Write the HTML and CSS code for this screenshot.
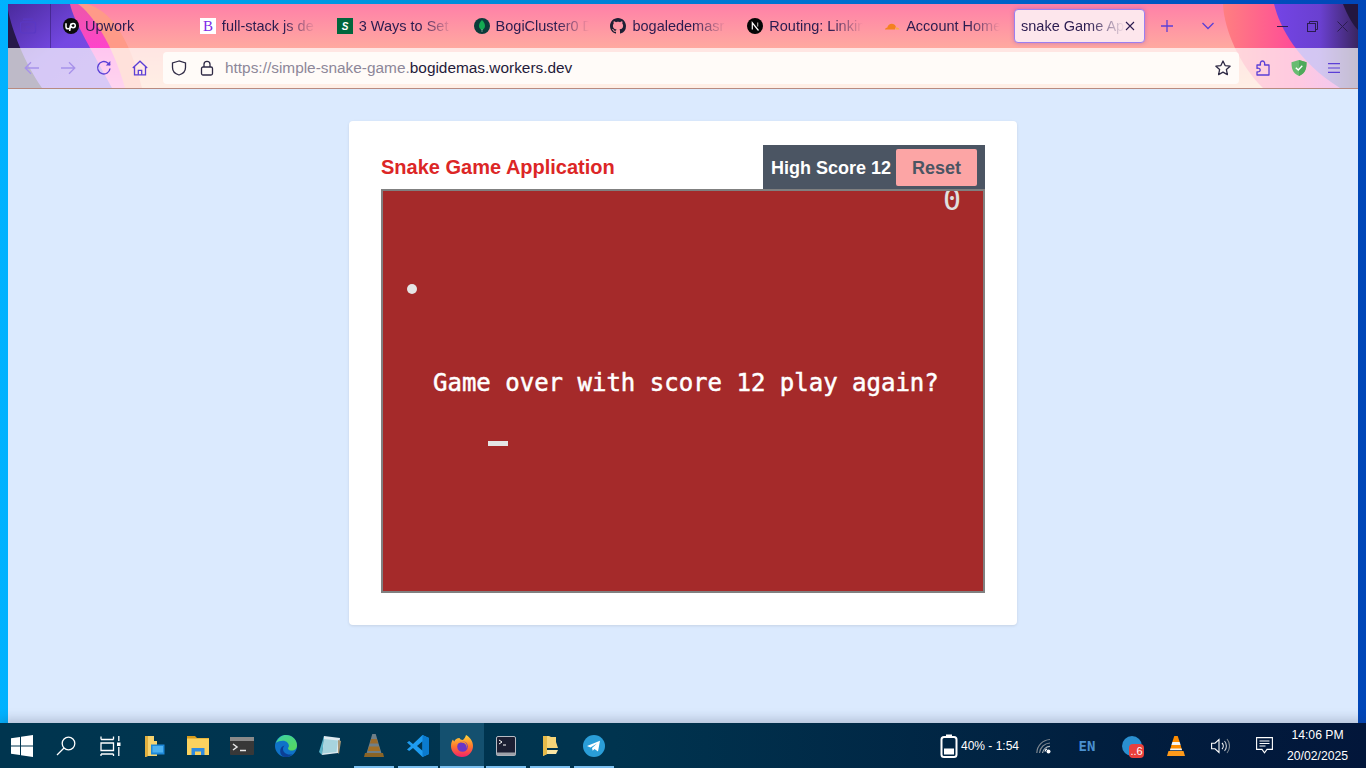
FILE: index.html
```html
<!DOCTYPE html>
<html lang="en">
<head>
    <meta charset="UTF-8">
    <meta name="viewport" content="width=device-width, initial-scale=1.0">
    <title>Snake Game Application</title>
    <link rel="stylesheet" href="styles.css">
</head>
<body>
    <div class="window">
        <div class="chrome">
            <!-- browser theme artwork, sits behind the tab strip and toolbar -->
            <svg class="theme-art" viewBox="8 4 1350 84" width="1350" height="84">
                <defs>
                    <linearGradient id="purple-l" x1="0" y1="0" x2="1" y2="1">
                        <stop offset="0" stop-color="#4a2a9c"/>
                        <stop offset="0.5" stop-color="#7448e2"/>
                        <stop offset="1" stop-color="#7e4ce0"/>
                    </linearGradient>
                    <linearGradient id="magenta-l" x1="0" y1="0" x2="0" y2="1">
                        <stop offset="0" stop-color="#ec58a8"/>
                        <stop offset="0.55" stop-color="#ff42cc"/>
                        <stop offset="1" stop-color="#ff70c8"/>
                    </linearGradient>
                    <linearGradient id="purple-r" x1="0" y1="0" x2="1" y2="0">
                        <stop offset="0" stop-color="#7444e6"/>
                        <stop offset="0.55" stop-color="#6a40d0"/>
                        <stop offset="1" stop-color="#3a2560"/>
                    </linearGradient>
                    <linearGradient id="pink-r" x1="0" y1="0" x2="1" y2="0">
                        <stop offset="0" stop-color="#ff7f80"/>
                        <stop offset="0.55" stop-color="#ff4a98"/>
                        <stop offset="1" stop-color="#c848d8"/>
                    </linearGradient>
                </defs>
                <path d="M8 4H87C108 10 128 32 142 88H8Z" fill="#ff9a88"/>
                <path d="M8 4H78C92 14 112 42 125 88H8Z" fill="url(#magenta-l)"/>
                <path d="M8 4H70C74 22 92 50 112 88H8Z" fill="url(#purple-l)"/>
                <path d="M8 10C12 30 24 62 42 88H8Z" fill="#261848"/>
                <path d="M1358 4H1223C1224 30 1240 66 1263 88H1358Z" fill="url(#pink-r)"/>
                <path d="M1358 4H1274C1280 28 1298 62 1340 88H1358Z" fill="url(#purple-r)"/>
                <path d="M1358 4H1343C1347 14 1352 24 1358 30Z" fill="#23163f"/>
            </svg>

            <div class="tabbar">
                <button class="view-btn">
                    <svg width="18" height="18" viewBox="0 0 18 18" fill="none" stroke="#5a38c4" stroke-width="1.2"><rect x="1.5" y="5" width="15" height="11" rx="2"/><path d="M4 2.2h10M7 10h4"/></svg>
                </button>
                <div class="tabs">
                    <div class="tab">
                        <svg class="favicon" viewBox="0 0 16 16"><circle cx="8" cy="8" r="8" fill="#0b0b0b"/><path d="M3 5.3v3.4a2.1 2.1 0 0 0 4.200 0c.2-1.900 1.200-3.300 2.900-3.300a2.200 2.200 0 0 1 0 4.400c-1.200 0-2-1-2.500-2.200L6.700 13" fill="none" stroke="#fff" stroke-width="1.5"/></svg>
                        <span class="tab-label">Upwork</span>
                    </div>
                    <div class="tab">
                        <svg class="favicon" viewBox="0 0 16 16"><rect width="16" height="16" fill="#fff"/><text x="8" y="13" text-anchor="middle" class="fav-b">B</text></svg>
                        <span class="tab-label">full-stack js de</span>
                    </div>
                    <div class="tab">
                        <svg class="favicon" viewBox="0 0 16 16"><rect width="16" height="16" fill="#00663c"/><text x="8" y="11.500" text-anchor="middle" class="fav-s">S</text></svg>
                        <span class="tab-label">3 Ways to Set</span>
                    </div>
                    <div class="tab">
                        <svg class="favicon" viewBox="0 0 16 16"><circle cx="8" cy="8" r="8" fill="#0b3b3a"/><path d="M8 2c2 2.200 3 4 3 6s-1.500 3.500-3 4.300C6.500 11.500 5 10 5 8s1-3.800 3-6Z" fill="#13aa52"/><path d="M7.700 11h.6v3h-.6Z" fill="#b8c4c2"/></svg>
                        <span class="tab-label">BogiCluster0 D</span>
                    </div>
                    <div class="tab">
                        <svg class="favicon" viewBox="0 0 16 16"><path fill="#1f1f33" d="M8 0C3.58 0 0 3.58 0 8c0 3.54 2.29 6.53 5.47 7.59.4.07.55-.17.55-.38 0-.19-.01-.82-.01-1.49-2.010.37-2.530-.49-2.690-.94-.09-.23-.48-.94-.82-1.130-.28-.15-.68-.52-.01-.53.63-.01 1.080.58 1.230.82.72 1.210 1.870.87 2.330.66.07-.52.28-.87.51-1.070-1.780-.2-3.640-.89-3.640-3.950 0-.87.31-1.590.82-2.150-.08-.2-.36-1.020.08-2.120 0 0 .67-.21 2.200.82.64-.18 1.320-.27 2-.27.68 0 1.360.09 2 .27 1.530-1.040 2.200-.82 2.200-.82.44 1.100.16 1.920.08 2.120.51.56.82 1.270.82 2.150 0 3.070-1.870 3.750-3.650 3.950.29.25.54.73.54 1.480 0 1.070-.01 1.930-.01 2.200 0 .21.15.46.55.38A8.013 8.013 0 0 0 16 8c0-4.420-3.580-8-8-8z"/></svg>
                        <span class="tab-label">bogaledemasr</span>
                    </div>
                    <div class="tab">
                        <svg class="favicon" viewBox="0 0 16 16"><circle cx="8" cy="8" r="8" fill="#050505"/><path d="M5.300 11.500V4.800L11.500 12.500" fill="none" stroke="#fff" stroke-width="1.2"/><path d="M10.700 4.600v4" stroke="#bbb" stroke-width="1.1"/></svg>
                        <span class="tab-label">Routing: Linkin</span>
                    </div>
                    <div class="tab">
                        <svg class="favicon" viewBox="0 0 16 16"><path d="M1 11.500c.1-1.200 1-1.800 2.200-1.800.7-2.600 2.500-4 4.600-4 1.900 0 3.300 1 4 2.800-.1 1-.5 2.200-1 3Z" fill="#f48120"/><path d="M11.500 11.500c.3-1 .5-1.500.6-2 .9-.2 2.900.2 3.400 2Z" fill="#fbad41"/></svg>
                        <span class="tab-label">Account Home</span>
                    </div>
                    <div class="tab tab-active">
                        <span class="tab-label">snake Game Ap</span>
                        <svg class="tab-close" width="10" height="10" viewBox="0 0 10 10" stroke="#2b1c50" stroke-width="1.1"><path d="M1 1l8 8M9 1l-8 8"/></svg>
                    </div>
                </div>
                <button class="strip-btn">
                    <svg width="14" height="14" viewBox="0 0 14 14" stroke="#5b3fd6" stroke-width="1.3"><path d="M7 1v12M1 7h12"/></svg>
                </button>
                <button class="strip-btn strip-btn-gap">
                    <svg width="14" height="8" viewBox="0 0 14 8" fill="none" stroke="#5b3fd6" stroke-width="1.3"><path d="M1.500 1l5.500 5.500L12.500 1"/></svg>
                </button>
                <div class="win-controls">
                    <button class="win-btn"><svg width="11" height="11" viewBox="0 0 11 11" stroke="#2b1c50"><path d="M0 5.500h11"/></svg></button>
                    <button class="win-btn"><svg width="11" height="11" viewBox="0 0 11 11" fill="none" stroke="#2b1c50"><rect x=".5" y="2.500" width="8" height="8"/><path d="M2.500 2.500V.5h8v8h-2"/></svg></button>
                    <button class="win-btn"><svg width="11" height="11" viewBox="0 0 11 11" stroke="#2b1c50"><path d="M.5.5l10 10M10.500.5l-10 10"/></svg></button>
                </div>
            </div>

            <div class="toolbar">
                <button class="tool-btn">
                    <svg width="16" height="14" viewBox="0 0 16 14" fill="none" stroke="#a792ea" stroke-width="1.3"><path d="M15 7H1.500M7 1.200 1.200 7 7 12.800"/></svg>
                </button>
                <button class="tool-btn">
                    <svg width="16" height="14" viewBox="0 0 16 14" fill="none" stroke="#a792ea" stroke-width="1.3"><path d="M1 7h13.500M9 1.200 14.800 7 9 12.800"/></svg>
                </button>
                <button class="tool-btn">
                    <svg width="16" height="16" viewBox="0 0 16 16" fill="none" stroke="#5b3fd6" stroke-width="1.4"><path d="M14 8.500A6.200 6.200 0 1 1 11.800 3L14 5"/><path d="M14.300 1v4.500H9.800" fill="#5b3fd6" stroke="none"/></svg>
                </button>
                <button class="tool-btn">
                    <svg width="16" height="16" viewBox="0 0 16 16" fill="none" stroke="#5b3fd6" stroke-width="1.3"><path d="M.8 8 8 1.200 15.200 8"/><path d="M2.500 6.800v8h11v-8"/><path d="M6.300 14.800v-4.500h3.400v4.500"/></svg>
                </button>
                <div class="urlbar">
                    <svg class="url-shield" width="16" height="16" viewBox="0 0 16 16" fill="none" stroke="#2f2a45" stroke-width="1.3"><path d="M8 1 1.500 3v4.500C1.500 11.500 4.500 14 8 15c3.500-1 6.500-3.500 6.500-7.500V3Z"/></svg>
                    <svg class="url-lock" width="14" height="16" viewBox="0 0 14 16" fill="none" stroke="#2f2a45" stroke-width="1.3"><rect x="1.500" y="7" width="11" height="8" rx="1.500"/><path d="M4 7V4.300a3 3 0 0 1 6 0V7"/></svg>
                    <span class="url-text"><span class="url-dim">https://simple-snake-game.</span>bogidemas.workers.dev</span>
                    <svg class="url-star" width="16" height="16" viewBox="0 0 16 16" fill="none" stroke="#2f2a45" stroke-width="1.3"><path d="M8 1l2.100 4.600 5 .6-3.700 3.400 1 5L8 12.100 3.600 14.600l1-5L.9 6.200l5-.6Z" stroke-linejoin="round"/></svg>
                </div>
                <button class="tool-btn tool-btn-first">
                    <svg width="14" height="16" viewBox="0 0 14 16" fill="none" stroke="#5b3fd6" stroke-width="1.3"><path d="M1 5h3.500C4 3.500 4.300 1 6.500 1S9 3.500 8.500 5H13v10H1v-3.200c2 .5 3.200-.5 3.200-1.800S3 7.800 1 8.300Z" stroke-linejoin="round"/></svg>
                </button>
                <button class="tool-btn">
                    <svg width="16" height="16" viewBox="0 0 16 16"><path d="M8 0 .5 2.300c0 6 .8 10.700 7.500 13.700 6.700-3 7.500-7.700 7.500-13.700Z" fill="#68bc71"/><path d="M8 0v16c6.700-3 7.500-7.700 7.500-13.700Z" fill="#4fa95a"/><path d="M4.800 7.700 7.300 10l4-4.200" fill="none" stroke="#fff" stroke-width="1.4"/></svg>
                </button>
                <button class="tool-btn tool-btn-last">
                    <svg width="12" height="10" viewBox="0 0 12 10" stroke="#5b3fd6" stroke-width="1.1"><path d="M0 .6h12M0 5h12M0 9.400h12"/></svg>
                </button>
            </div>
        </div>

        <main class="page">
            <section class="card">
                <header class="card-head">
                    <h1 class="title">Snake Game Application</h1>
                    <div class="score-box">
                        <span class="high-score">High Score 12</span>
                        <button class="reset-btn">Reset</button>
                    </div>
                </header>
                <div class="board">
                    <span class="board-score">0</span>
                    <span class="food"></span>
                    <span class="game-over">Game over with score 12 play again?</span>
                    <span class="snake"></span>
                </div>
            </section>
        </main>
    </div>

    <footer class="taskbar">
        <div class="task-icons">
            <div class="task-btn">
                <svg width="22" height="22" viewBox="0 0 22 22" fill="#fff"><path d="M0 3.200 9 2v8.500H0ZM10 1.800 22 0v10.500H10ZM0 11.500h9V20L0 18.800ZM10 11.500h12V22l-12-1.800Z"/></svg>
            </div>
            <div class="task-btn">
                <svg width="20" height="20" viewBox="0 0 20 20" fill="none" stroke="#fff" stroke-width="1.3"><circle cx="12.500" cy="7.500" r="6.300"/><path d="M8 12 1 19"/></svg>
            </div>
            <div class="task-btn">
                <svg width="21" height="20" viewBox="0 0 21 20" fill="none" stroke="#fff" stroke-width="1.3"><path d="M1 3.500h12.500M1 .5v3M13.500.5v3M1 7h12.500v7.500H1ZM1 18h12.500M1 18v2M13.500 18v2M18.800 0v5M18.800 11v9"/><rect x="17" y="6.500" width="3.500" height="3.500" fill="#fff" stroke="none"/></svg>
            </div>
            <div class="task-btn">
                <svg width="21" height="22" viewBox="0 0 21 22"><path d="M1 1h9v5h3v15H4l-3 1Z" fill="#f6d36f"/><path d="M1 1h3v20l-3 1Z" fill="#e2b03f"/><rect x="7" y="9.500" width="13.500" height="10" fill="#1e88d8"/><rect x="8.500" y="11" width="10.500" height="6.500" fill="#4db1f0"/></svg>
            </div>
            <div class="task-btn">
                <svg width="22" height="19" viewBox="0 0 22 19"><path d="M0 0h8l2 2h12v3H0Z" fill="#d89b1c"/><rect y="2.500" width="22" height="16.500" fill="#fbd25f"/><path d="M4.500 19v-7h13v7h-3.500v-3.500H8V19Z" fill="#2f8be0"/></svg>
            </div>
            <div class="task-btn">
                <svg width="24" height="18" viewBox="0 0 24 18"><rect width="24" height="18" rx="1" fill="#383838"/><rect width="24" height="4" fill="#8a8a8a"/><path d="M3 7l4 3-4 3" fill="none" stroke="#e6e6e6" stroke-width="1.5"/><path d="M10 13.500h6" stroke="#e6e6e6" stroke-width="1.5"/></svg>
            </div>
            <div class="task-btn">
                <svg width="22" height="22" viewBox="0 0 22 22"><defs><linearGradient id="edge-a" x1="0" y1="0" x2="1" y2="1"><stop offset="0" stop-color="#3ad0a8"/><stop offset="1" stop-color="#58d858"/></linearGradient></defs><circle cx="11" cy="11" r="11" fill="#0f72c8"/><path d="M1 8C3 2.500 7 0 11 0c6 0 11 4.500 11 10.500 0 3-2.300 5-5.300 5-2 0-3.700-.9-3.700-2.300 0-.7.9-1.100.9-2.500 0-2.800-2.900-5-5.900-5C5 5.700 2.500 6.500 1 8Z" fill="url(#edge-a)"/><path d="M8 14c0 3 3 5.500 6.500 5.500 1 0 2-.2 3-.6-1.700 2-4 3.100-6.500 3.100-3 0-5.800-2-5.800-6 0-2.500 1.500-5 4.300-5.500C8.700 11.500 8 12.500 8 14Z" fill="#0b3f96"/></svg>
            </div>
            <div class="task-btn">
                <svg width="24" height="22" viewBox="0 0 24 22"><path d="M6 1 22 3l-2 15-16 2Z" fill="#dfeaf0"/><path d="M6 1 1 17l3 3L6 4Z" fill="#59b3c8"/><path d="M6 4 20 5.500 18.500 17 4.500 18.500Z" fill="#a7d4de"/><path d="M20 5l3 1-2 13-1-1Z" fill="#a89878"/></svg>
            </div>
            <div class="task-btn task-btn-open">
                <svg width="20" height="24" viewBox="0 0 20 24"><path d="M8.300 0h3.400l6 20H2.300Z" fill="#6f7f88"/><path d="M7.200 5h5.600l1.300 4.500H5.900Z" fill="#9a6b2c"/><path d="M5 12.500h10l1.200 4.500H3.800Z" fill="#a37026"/><path d="M1 19h18l1 4H0Z" fill="#8a6426"/></svg>
            </div>
            <div class="task-btn task-btn-open">
                <svg width="22" height="22" viewBox="0 0 22 22"><path d="M15.500 0 22 3v16l-6.500 3L6 13l-3.800 3L0 14.500 4 11 0 7.500 2.200 6 6 9Zm0 6.200L10 11l5.500 4.800Z" fill="#1e9cf0"/><path d="M15.500 0 22 3v16l-6.500 3Z" fill="#0a7bcf"/></svg>
            </div>
            <div class="task-btn task-btn-active">
                <svg width="22" height="22" viewBox="0 0 22 22"><defs><linearGradient id="fx-a" x1="0.500" y1="0" x2="0.500" y2="1"><stop offset="0" stop-color="#ffd43b"/><stop offset="0.5" stop-color="#ff7a2b"/><stop offset="1" stop-color="#f5206a"/></linearGradient></defs><path d="M15 0c3.500 2 7 5.500 7 11a11 11 0 0 1-22 0C0 8 1 5.500 2 4.500c.3 1 .8 1.500 1.300 2C4 4.500 6 3 8.500 3 9 4 10 5 12 5c1-1 2.500-3 3-5Z" fill="url(#fx-a)"/><circle cx="11.500" cy="11.500" r="5.300" fill="#6a35c8"/><path d="M6 9c2-1.800 5-2 7-1 2 1.200 3 3 2.500 5.500 1.500-3-.5-7-4.500-7.500C8.500 5.500 7 7 6 9Z" fill="#ff9a2e"/></svg>
            </div>
            <div class="task-btn task-btn-open">
                <svg width="20" height="20" viewBox="0 0 20 20"><rect x=".5" y=".5" width="19" height="19" rx="1.500" fill="#1c1f33" stroke="#b8bcc4"/><rect x=".5" y="16.500" width="19" height="3" fill="#9ea2aa"/><path d="M3 4l3 2-3 2" fill="none" stroke="#fff"/><path d="M7 9h3" stroke="#fff"/></svg>
            </div>
            <div class="task-btn task-btn-open">
                <svg width="15" height="21" viewBox="0 0 15 21"><path d="M0 1h6l2 1h5v5l2 6H4v6l-4 2Z" fill="#f6d579"/><path d="M0 1h4v18l-4 2Z" fill="#e6bb4a"/><path d="M4 15h11l-2 4H4Z" fill="#fbe6a4"/></svg>
            </div>
            <div class="task-btn task-btn-open">
                <svg width="22" height="22" viewBox="0 0 22 22"><circle cx="11" cy="11" r="11" fill="#2a9ed8"/><path d="M4 11 17 5.800 15 16.500 11.500 14l-1.800 1.800L9 13l5-4.500L7.500 12.500Z" fill="#fff"/></svg>
            </div>
        </div>
        <div class="tray">
            <div class="battery">
                <svg width="18" height="24" viewBox="0 0 18 24"><path d="M6 .5h6v2H6Z" fill="#fff"/><rect x="1.500" y="3" width="15" height="20" rx="2.500" fill="none" stroke="#fff" stroke-width="2"/><rect x="4" y="14.500" width="10" height="6" fill="#fff"/></svg>
                <span>40% - 1:54</span>
            </div>
            <div class="tray-btn">
                <svg width="16" height="16" viewBox="0 0 16 16" fill="none" stroke="#7d8790" stroke-width="1.2"><path d="M.8 15A14 14 0 0 1 14 1.500M3.500 15A11 11 0 0 1 14 5"/><path d="M6.500 15A8 8 0 0 1 14 8.300" stroke="#aab2b8"/><circle cx="12.500" cy="13.500" r="2" fill="#fff" stroke="none"/><path d="M9 13.500a3 3 0 0 1 2-2.500" stroke="#fff"/></svg>
            </div>
            <div class="tray-btn tray-lang">EN</div>
            <div class="tray-btn">
                <span class="badge-icon"><span class="badge-count">..6</span></span>
            </div>
            <div class="tray-btn">
                <svg width="18" height="20" viewBox="0 0 18 20"><path d="M7.300 0h3.400l2 6H5.300Z" fill="#ff8c00"/><path d="M5.300 6h7.400l.9 3H4.400Z" fill="#f4f4f4"/><path d="M4.400 9h9.200l1.300 5H3.100Z" fill="#ff8c00"/><path d="M3.500 12.500h11l.6 1.800H2.900Z" fill="#f4f4f4"/><path d="M1.500 15h15l1.500 5H0Z" fill="#ff9a1a"/></svg>
            </div>
            <div class="tray-btn">
                <svg width="19" height="16" viewBox="0 0 19 16" fill="none" stroke="#fff" stroke-width="1.1"><path d="M.6 5.200h3.400L8 1.500v13L4 10.800H.6Z"/><path d="M11 5a4.300 4.300 0 0 1 0 6"/><path d="M13.500 3a7.500 7.500 0 0 1 0 10" stroke="#c9ced3"/><path d="M16 1a11 11 0 0 1 0 14" stroke="#7d8790"/></svg>
            </div>
            <div class="tray-btn">
                <svg width="17" height="17" viewBox="0 0 17 17" fill="none" stroke="#fff" stroke-width="1.1"><path d="M.6.6h15.800v11.800H11l-2.500 3.400L6 12.400H.6Z"/><path d="M3.500 4h10M3.500 6.500h10M3.500 9h6"/></svg>
            </div>
            <div class="clock">
                <span>14:06 PM</span>
                <span>20/02/2025</span>
            </div>
        </div>
    </footer>
</body>
</html>
```

FILE: styles.css
```css
* {
    box-sizing: border-box;
}

body {
    margin: 0;
    height: 100vh;
    overflow: hidden;
    display: flex;
    flex-direction: column;
    font-family: 'Liberation Sans', Arial, sans-serif;
    background: linear-gradient(90deg, #00b2ff 0%, #0090dc 30%, #0070d0 60%, #0046b8 100%);
}

button {
    border: none;
    background: none;
    padding: 0;
    font-family: inherit;
}

svg {
    display: block;
    flex-shrink: 0;
}

.window {
    flex: 1;
    min-height: 0;
    margin: 4px 8px 0;
    display: flex;
    flex-direction: column;
}

/* browser chrome */
.chrome {
    position: relative;
    height: 85px;
    background: linear-gradient(180deg, #ff80a8 0%, #ffa9a0 52%, #ffc8a8 100%);
    border-bottom: 1px solid #b88a80;
    flex-shrink: 0;
}

.theme-art {
    position: absolute;
    left: 0;
    top: 0;
}

.tabbar {
    position: relative;
    height: 44px;
    display: flex;
    align-items: center;
}

.view-btn {
    width: 43px;
    height: 44px;
    border-right: 1px solid rgba(40, 20, 90, 0.45);
    display: flex;
    align-items: center;
    justify-content: center;
    padding-right: 3px;
}

.tabs {
    display: flex;
    align-items: center;
    margin-left: 5px;
    width: 1089px;
}

.tab {
    width: 136.86px;
    flex-shrink: 0;
    height: 34px;
    padding: 0 14px 1px 7px;
    display: flex;
    align-items: center;
    gap: 6px;
    color: #2b1c50;
    font-size: 14.5px;
    white-space: nowrap;
}

.favicon {
    width: 16px;
    height: 16px;
}

.fav-b {
    font-family: 'Liberation Serif', serif;
    font-size: 15px;
    fill: #7c2ae8;
}

.fav-s {
    font-family: 'Liberation Sans', sans-serif;
    font-size: 10px;
    font-weight: bold;
    font-style: italic;
    fill: #fff;
}

.tab-label {
    flex: 1;
    min-width: 0;
    -webkit-mask-image: linear-gradient(90deg, #000 65%, transparent 100%);
    mask-image: linear-gradient(90deg, #000 65%, transparent 100%);
}

.tab-active {
    width: 131px;
    background: #fde6ec;
    border: 1px solid #9b7ff0;
    border-radius: 4px;
    box-shadow: 0 0 4px rgba(90, 50, 200, 0.35);
    padding: 0 9px 1px 6px;
    gap: 0;
}

.strip-btn {
    width: 36px;
    height: 34px;
    margin-left: 4px;
    display: flex;
    align-items: center;
    justify-content: center;
}

.strip-btn-gap {
    margin-left: 5px;
}

.win-controls {
    margin-left: auto;
    padding-right: 1px;
    display: flex;
}

.win-btn {
    width: 30px;
    height: 44px;
    display: flex;
    align-items: center;
    justify-content: center;
}

.toolbar {
    position: relative;
    height: 40px;
    padding: 0 6px;
    display: flex;
    align-items: center;
    background: rgba(255, 255, 255, 0.7);
}

.tool-btn {
    width: 36px;
    height: 32px;
    display: flex;
    align-items: center;
    justify-content: center;
}

.tool-btn-first {
    margin-left: 6px;
}

.tool-btn-last {
    margin-left: -1px;
}

.urlbar {
    flex: 1;
    height: 32px;
    margin-left: 5px;
    padding: 0 8px;
    display: flex;
    align-items: center;
    background: #fffbf8;
    border-radius: 4px;
    color: #1f1a3a;
    font-size: 15.4px;
}

.url-lock {
    margin-left: 13px;
}

.url-text {
    margin-left: 11px;
    padding-bottom: 1px;
    white-space: nowrap;
}

.url-dim {
    color: #8d8799;
}

.url-star {
    margin-left: auto;
}

/* page content */
.page {
    flex: 1;
    min-height: 0;
    background: #dbeafe;
    display: flex;
    justify-content: center;
    align-items: flex-start;
    padding-top: 32px;
}

.card {
    width: 668px;
    padding: 24px 32px 32px;
    background: #fff;
    border-radius: 4px;
    box-shadow: 0 1px 3px rgba(0, 0, 0, 0.1);
}

.card-head {
    display: flex;
    justify-content: space-between;
    align-items: center;
}

.title {
    margin: 0;
    font-size: 20px;
    font-weight: bold;
    color: #dc2626;
}

.score-box {
    width: 222px;
    height: 44px;
    padding: 4px 8px;
    display: flex;
    align-items: center;
    gap: 5px;
    background: #4b5563;
}

.high-score {
    padding-top: 2px;
    color: #fff;
    font-size: 18px;
    font-weight: bold;
    white-space: nowrap;
}

.reset-btn {
    width: 81px;
    height: 37px;
    padding-top: 2px;
    background: #fca5a5;
    border-radius: 2px;
    color: #4b5563;
    font-size: 18px;
    font-weight: bold;
}

.board {
    position: relative;
    width: 604px;
    height: 404px;
    background: #a52a2a;
    border: 2px solid #808080;
    overflow: hidden;
    font-family: 'DejaVu Sans Mono', monospace;
}

/* items on the game canvas */
.board-score {
    position: absolute;
    left: 560px;
    top: -9px;
    font-size: 30px;
    line-height: 35px;
    color: #e0e0e0;
}

.food {
    position: absolute;
    left: 24px;
    top: 93px;
    width: 10px;
    height: 10px;
    border-radius: 50%;
    background: #e5e5e5;
}

.game-over {
    position: absolute;
    left: 50px;
    top: 178px;
    font-size: 24px;
    line-height: 28px;
    color: #fff;
    -webkit-text-stroke: 0.5px #fff;
    white-space: nowrap;
}

.snake {
    position: absolute;
    left: 105px;
    top: 250px;
    width: 20px;
    height: 5px;
    background: #e5e5e5;
}

/* taskbar */
.taskbar {
    position: relative;
    height: 45px;
    flex-shrink: 0;
    display: flex;
    justify-content: space-between;
    background: linear-gradient(90deg, #00354f 0%, #00344f 45%, #011f3f 80%, #02163a 100%);
    box-shadow: 0 -4px 10px rgba(40, 50, 80, 0.22);
    color: #fff;
}

.task-icons {
    display: flex;
}

.task-btn {
    width: 44px;
    height: 45px;
    display: flex;
    align-items: center;
    justify-content: center;
}

.task-btn-open {
    background: linear-gradient(#7cc0f0, #7cc0f0) no-repeat 2px 100% / 40px 2px;
}

.task-btn-active {
    background: linear-gradient(#7cc0f0, #7cc0f0) no-repeat 0 100% / 44px 2px, #14506f;
}

.tray {
    display: flex;
    align-items: center;
    padding-right: 17px;
}

.battery {
    width: 84px;
    padding-left: 2px;
    display: flex;
    align-items: center;
    gap: 3px;
    font-size: 12px;
    white-space: nowrap;
}

.tray-btn {
    width: 44px;
    height: 45px;
    display: flex;
    align-items: center;
    justify-content: center;
}

.tray-lang {
    padding-right: 2px;
    color: #4a90d0;
    font-family: 'DejaVu Sans Mono', monospace;
    font-size: 14px;
    font-weight: bold;
}

.badge-icon {
    position: relative;
    width: 20px;
    height: 20px;
    border-radius: 50%;
    background: #2a8fd0;
}

.badge-count {
    position: absolute;
    right: -2px;
    bottom: -2px;
    width: 15px;
    height: 14px;
    border-radius: 4px;
    background: #e8403c;
    font-size: 11px;
    line-height: 14px;
    text-align: center;
}

.clock {
    width: 63px;
    display: flex;
    flex-direction: column;
    align-items: center;
    gap: 7px;
    font-size: 12.2px;
    line-height: 14px;
    white-space: nowrap;
}
```
